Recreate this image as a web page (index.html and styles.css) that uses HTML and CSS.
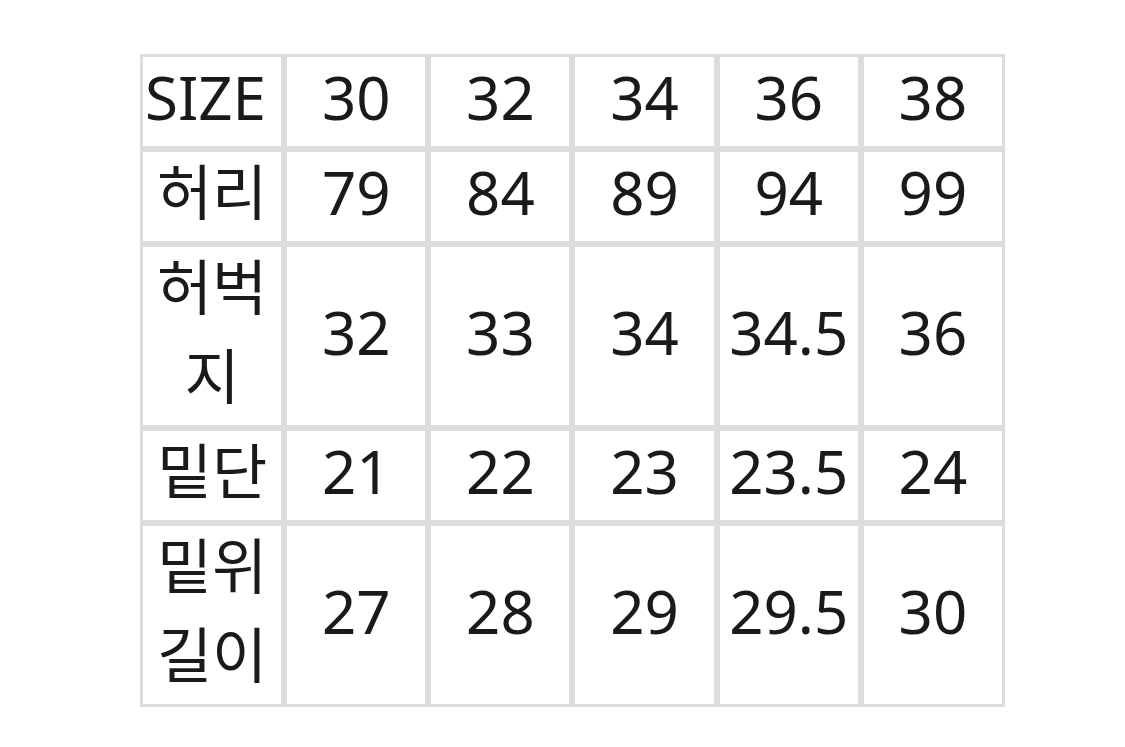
FILE: index.html
```html
<!DOCTYPE html>
<html lang="ko">
<head>
<meta charset="utf-8">
<title>Size chart</title>
<link rel="stylesheet" href="styles.css">
</head>
<body>
<table class="size-table">
  <tbody>
    <tr><td class="label label-size"><span class="t">SIZE</span></td><td><span class="t">30</span></td><td><span class="t">32</span></td><td><span class="t">34</span></td><td><span class="t">36</span></td><td><span class="t">38</span></td></tr>
    <tr><td class="label"><span class="t">허리</span></td><td><span class="t">79</span></td><td><span class="t">84</span></td><td><span class="t">89</span></td><td><span class="t">94</span></td><td><span class="t">99</span></td></tr>
    <tr><td class="label"><span class="t">허벅지</span></td><td><span class="t">32</span></td><td><span class="t">33</span></td><td><span class="t">34</span></td><td><span class="t">34.5</span></td><td><span class="t">36</span></td></tr>
    <tr><td class="label"><span class="t">밑단</span></td><td><span class="t">21</span></td><td><span class="t">22</span></td><td><span class="t">23</span></td><td><span class="t">23.5</span></td><td><span class="t">24</span></td></tr>
    <tr><td class="label"><span class="t">밑위길이</span></td><td><span class="t">27</span></td><td><span class="t">28</span></td><td><span class="t">29</span></td><td><span class="t">29.5</span></td><td><span class="t">30</span></td></tr>
  </tbody>
</table>
</body>
</html>
```

FILE: styles.css
```css
html, body {
  margin: 0;
  padding: 0;
  background: #ffffff;
}

body {
  width: 1125px;
  height: 747px;
  overflow: hidden;
}

.size-table {
  margin: 54px 0 0 140px;
  width: 865px;
  table-layout: fixed;
  border-collapse: separate;
  border-spacing: 0;
  font-family: "Noto Sans", "Noto Sans CJK KR", sans-serif;
  font-size: 60px;
  line-height: 89px;
  color: #1a1a1a;
}

.size-table td {
  border: 3px solid #dcdcdc;
  padding: 0 1px;
  text-align: center;
  vertical-align: middle;
}

.size-table .t {
  line-height: 80px;
  vertical-align: 4px;
}

.size-table .label-size {
  text-align: left;
  padding-left: 2px;
  white-space: nowrap;
}
```
